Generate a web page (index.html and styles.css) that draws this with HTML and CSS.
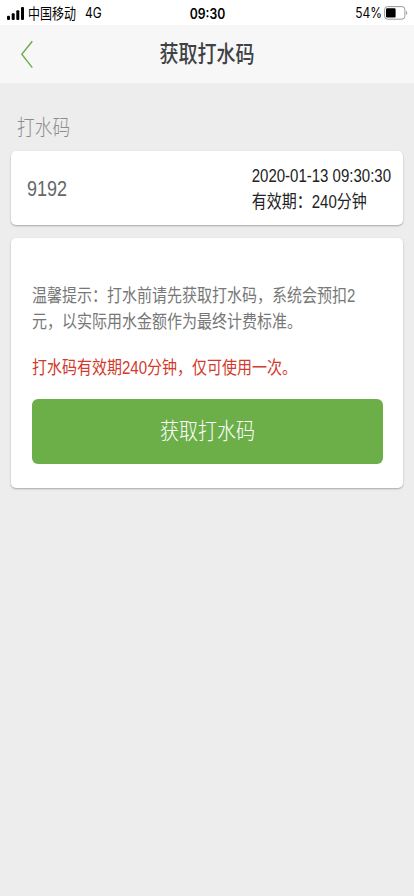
FILE: index.html
```html
<!DOCTYPE html>
<html lang="zh-CN">
<head>
<meta charset="utf-8">
<meta name="viewport" content="width=device-width, initial-scale=1">
<title>获取打水码</title>
<link rel="stylesheet" href="styles.css">
</head>
<body>
<header class="status">
  <div class="status-left">
    <svg class="signal" width="17" height="13" viewBox="0 0 17 13"><rect x="0" y="8.8" width="3" height="4.2" rx="1"/><rect x="4.7" y="6.2" width="3" height="6.8" rx="1"/><rect x="9.3" y="3.2" width="3" height="9.8" rx="1"/><rect x="14" y="0" width="3" height="13" rx="1"/></svg>
    <span class="tall carrier">中国移动</span>
    <span class="tall network">4G</span>
  </div>
  <span class="tall clock">09:30</span>
  <div class="status-right">
    <span class="tall percent">54%</span>
    <svg width="24" height="14" viewBox="0 0 24 14"><rect x=".6" y=".6" width="20.3" height="12.6" rx="3" fill="none" stroke="#999" stroke-width="1"/><rect x="2" y="2.3" width="9.6" height="9.2" rx="1.2"/><path d="M22.2 4.8Q24.4 7 22.2 9.2Z" fill="#999"/></svg>
  </div>
</header>
<nav class="nav">
  <svg class="back" width="14" height="29" viewBox="0 0 14 29"><path d="M12.3 1.2L1.8 14.3L12.3 27.6" fill="none" stroke="#6aae48" stroke-width="1.4"/></svg>
  <h1 class="tall title">获取打水码</h1>
</nav>
<main class="content">
  <h2 class="tall label">打水码</h2>
  <section class="card code-card">
    <span class="tall code">9192</span>
    <div class="meta">
      <span class="tall">2020-01-13 09:30:30</span>
      <span class="tall">有效期：240分钟</span>
    </div>
  </section>
  <section class="card tips-card">
    <p class="tall tip">温馨提示：打水前请先获取打水码，系统会预扣2<br>元，以实际用水金额作为最终计费标准。</p>
    <p class="tall warning">打水码有效期240分钟，仅可使用一次。</p>
    <button class="button" type="button"><span class="tall">获取打水码</span></button>
  </section>
</main>
</body>
</html>
```
FILE: styles.css
```css
* { box-sizing: border-box; margin: 0; padding: 0; }
body {
  height: 896px;
  overflow: hidden;
  background: #ededed;
  color: #222;
  font-family: "Liberation Sans", "Noto Sans CJK SC", sans-serif;
}
svg { display: block; flex: none; }
/* Condensed lettering: glyphs are taller than they are wide */
.tall { display: block; transform: scaleY(1.2); white-space: nowrap; }
.status {
  display: grid;
  grid-template-columns: 1fr auto 1fr;
  align-items: center;
  height: 25px;
  padding: 1px 6px 0 7px;
  background: #fff;
  color: #000;
  font-size: 12px;
  line-height: 20px;
}
.status-left, .status-right { display: flex; align-items: center; }
.status-right { justify-content: flex-end; gap: 2px; }
.carrier { margin-left: 4px; padding-top: 1px; }
.network { margin-left: 9px; font: 12px/20px Inter, sans-serif; }
.clock { padding-top: 1px; font: 600 12.2px/20px Inter, sans-serif; transform: scaleY(1.15); }
.percent { font: 12px/20px Inter, sans-serif; transform: scaleY(1.15); }
.nav {
  display: grid;
  grid-template-columns: 40px 1fr 40px;
  align-items: center;
  height: 58px;
  background: #f7f7f7;
}
.back { margin-left: 20px; }
.title {
  padding-top: 1px;
  color: #3e4245;
  font-size: 19px;
  font-weight: 500;
  line-height: 28px;
  text-align: center;
}
.content { padding: 31px 11px 0; }
.label {
  height: 28px;
  margin: 0 0 9px 6px;
  color: #8c8c8c;
  font-size: 17.7px;
  font-weight: 300;
  line-height: 28px;
}
.card {
  border-radius: 5px;
  background: #fff;
  box-shadow: 0 1px 2px rgba(0, 0, 0, .3);
}
.code-card {
  display: flex;
  align-items: center;
  justify-content: space-between;
  height: 74px;
  padding: 2px 12px 0 16px;
}
.code { color: #666; font-size: 18px; line-height: 26px; }
.meta { font-size: 15px; line-height: 26.5px; }
.tips-card {
  height: 250px;
  margin-top: 13px;
  padding: 49px 20px 0 21px;
}
.tip { color: #777; font-size: 15px; line-height: 22px; }
.warning {
  margin-top: 24px;
  color: #d13a2c;
  font-size: 15px;
  line-height: 26px;
}
.button {
  display: block;
  width: 351px;
  height: 65px;
  margin-top: 18px;
  border: 0;
  border-radius: 6px;
  background: #6caf49;
  color: #fff;
  font: 300 19px/28px "Liberation Sans", "Noto Sans CJK SC", sans-serif;
}
```
